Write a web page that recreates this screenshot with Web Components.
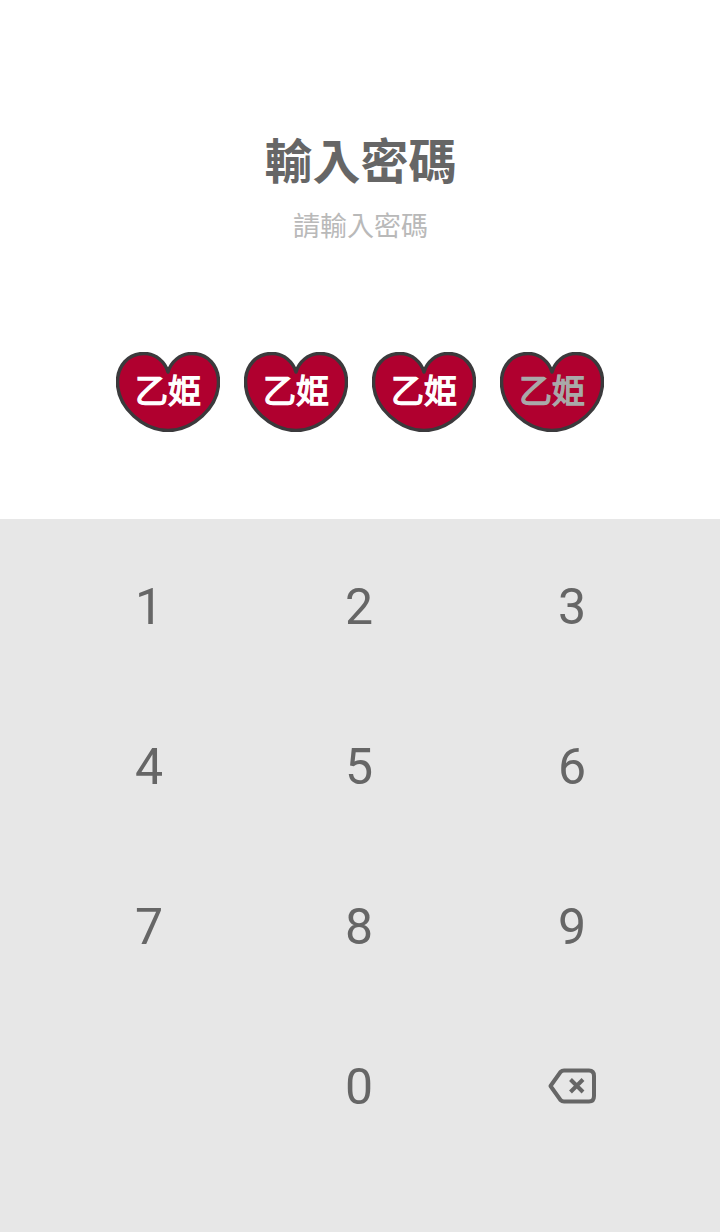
<!DOCTYPE html>
<html lang="zh-Hant">
<head>
<meta charset="utf-8">
<title>輸入密碼</title>
<style>
  html, body { margin: 0; padding: 0; background: #fff; }
  body { width: 720px; height: 1232px; display: flex; flex-direction: column; overflow: hidden; }
</style>
</head>
<body>
<lock-header title-text="輸入密碼" hint="請輸入密碼"></lock-header>
<pin-row>
  <pin-heart filled></pin-heart>
  <pin-heart filled></pin-heart>
  <pin-heart filled></pin-heart>
  <pin-heart></pin-heart>
</pin-row>
<num-pad></num-pad>

<script>
class LockHeader extends HTMLElement {
  constructor() {
    super();
    this.attachShadow({ mode: 'open' });
    this.shadowRoot.innerHTML = `
      <style>
        :host {
          display: flex;
          flex-direction: column;
          align-items: center;
          padding-top: 128px;
          font-family: "Noto Sans CJK TC", "Noto Sans", sans-serif;
        }
        h1 {
          margin: 0 0 0 1px;
          font-size: 48px;
          line-height: 60px;
          font-weight: 700;
          color: #666;
        }
        p {
          margin: 7px 0 0 1px;
          font-size: 27px;
          line-height: 60px;
          font-weight: 400;
          color: #b9b9b9;
        }
      </style>
      <h1></h1>
      <p></p>
    `;
  }

  connectedCallback() {
    this.shadowRoot.querySelector('h1').textContent = this.getAttribute('title-text');
    this.shadowRoot.querySelector('p').textContent = this.getAttribute('hint');
  }
}

class PinRow extends HTMLElement {
  constructor() {
    super();
    this.attachShadow({ mode: 'open' });
    this.shadowRoot.innerHTML = `
      <style>
        :host {
          display: flex;
          justify-content: center;
          gap: 24px;
          margin-top: 97px;
          height: 167px;
        }
      </style>
      <slot></slot>
    `;
  }
}

class PinHeart extends HTMLElement {
  constructor() {
    super();
    this.attachShadow({ mode: 'open' });
    this.shadowRoot.innerHTML = `
      <style>
        :host {
          display: block;
          position: relative;
          width: 104px;
          height: 80px;
        }
        svg { display: block; }
        span {
          position: absolute;
          left: 0;
          right: 0;
          top: 17px;
          text-align: center;
          font-family: "Noto Sans CJK JP", "Noto Sans", sans-serif;
          font-size: 33px;
          line-height: 40px;
          font-weight: 400;
          color: #a9a9a9;
          -webkit-text-stroke: 1.300px currentColor;
        }
        :host([filled]) span { color: #fff; }
      </style>
      <svg width="104" height="80" viewBox="0 0 104 80">
        <path d="M52 20C49 10 40 1.500 28 1.500 12 1.500 1.500 14 1.500 30 1.500 56 28 78.500 52 78.500 76 78.500 102.500 56 102.500 30 102.500 14 92 1.500 76 1.500 64 1.500 55 10 52 20Z"
          fill="#b0002f" stroke="#3b3a3c" stroke-width="3.500" stroke-linejoin="round"/>
      </svg>
      <span>乙姫</span>
    `;
  }
}

class NumPad extends HTMLElement {
  constructor() {
    super();
    this.attachShadow({ mode: 'open' });
    const keys = ['1', '2', '3', '4', '5', '6', '7', '8', '9', '', '0', 'del'];
    const cells = keys.map(k => {
      if (k === 'del') {
        return `<div class="key"><svg width="48" height="36" viewBox="0 0 48 36" fill="none" stroke="#666" stroke-width="4">
          <path d="M16 2.500H41Q46 2.500 46 8V28Q46 33.500 41 33.500H16Q14 33.500 12.500 32L2.500 18 12.500 4Q14 2.500 16 2.500Z" stroke-linejoin="round"/>
          <path d="M22.500 11.500L35 24M35 11.500L22.500 24"/>
        </svg></div>`;
      }
      return `<div class="key">${k}</div>`;
    }).join('');
    this.shadowRoot.innerHTML = `
      <style>
        :host {
          display: grid;
          grid-template-columns: 210px 210px 216px;
          grid-auto-rows: 160px;
          flex: 1;
          padding: 8px 0 0 44px;
          background: #e7e7e7;
        }
        .key {
          display: flex;
          align-items: center;
          justify-content: center;
          font-family: Roboto, sans-serif;
          font-size: 50px;
          color: #666;
        }
        svg { margin-top: -2px; }
      </style>
      ${cells}
    `;
  }
}

customElements.define('lock-header', LockHeader);
customElements.define('pin-row', PinRow);
customElements.define('pin-heart', PinHeart);
customElements.define('num-pad', NumPad);
</script>
</body>
</html>
